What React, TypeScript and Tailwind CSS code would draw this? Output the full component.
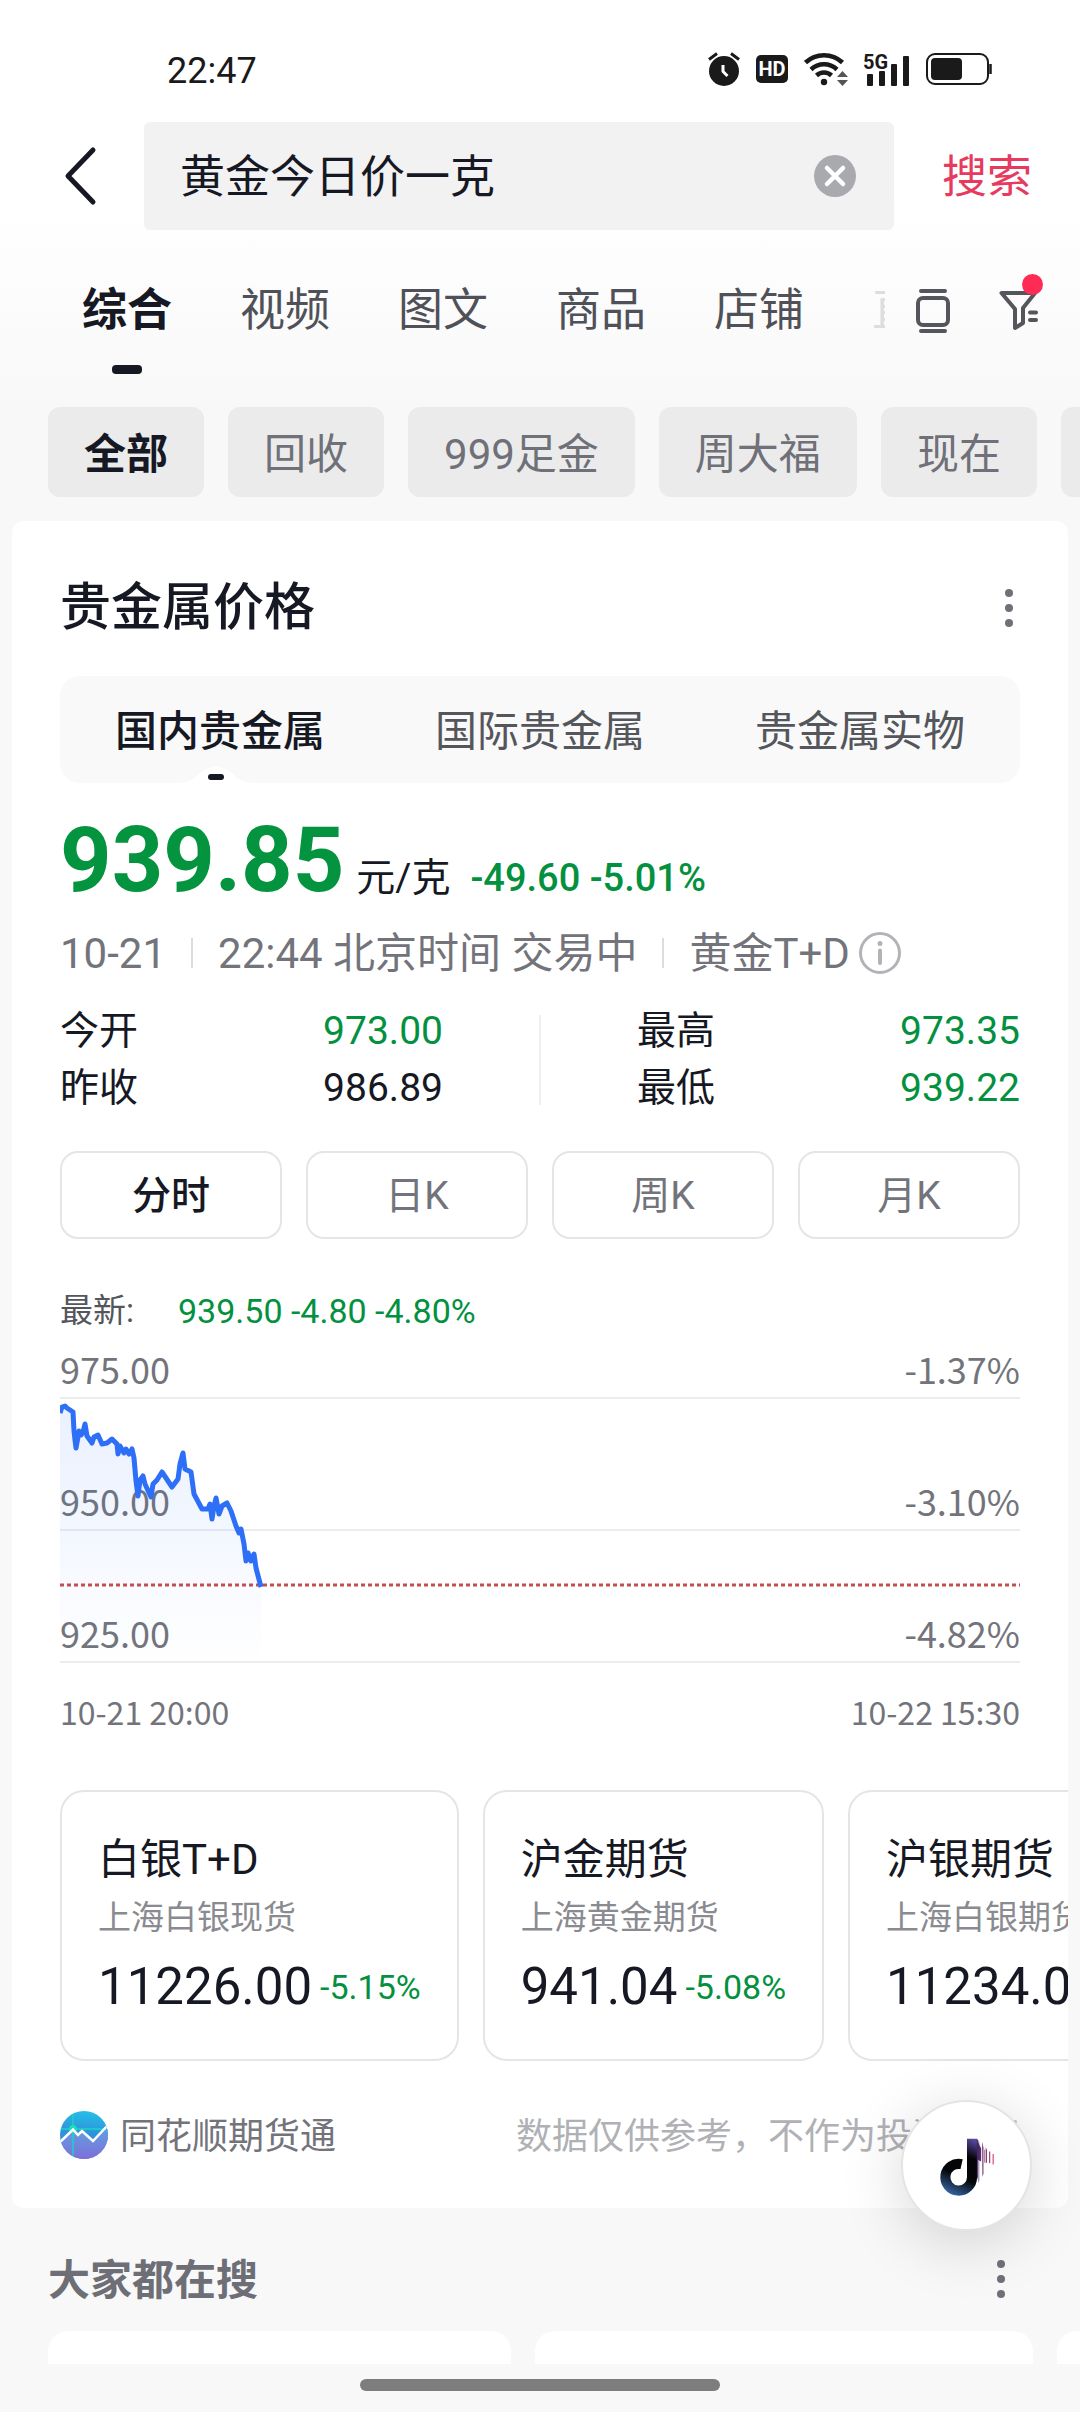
import { useState } from "react";

const searchTabs = ["综合", "视频", "图文", "商品", "店铺"];
const filters = ["全部", "回收", "999足金", "周大福", "现在", "今日"];
const metalTabs = ["国内贵金属", "国际贵金属", "贵金属实物"];
const periods = ["分时", "日K", "周K", "月K"];

const quotes = [
    { name: "白银T+D", market: "上海白银现货", price: "11226.00", change: "-5.15%" },
    { name: "沪金期货", market: "上海黄金期货", price: "941.04", change: "-5.08%" },
    { name: "沪银期货", market: "上海白银期货", price: "11234.00", change: "-5.10%" },
];

const gridRows = [
    { price: "975.00", percent: "-1.37%", height: "h-[53px]" },
    { price: "950.00", percent: "-3.10%", height: "h-[132px]" },
    { price: "925.00", percent: "-4.82%", height: "h-[132px]" },
];

// x,y pairs inside the 960x264 plot
const line =
    "0,14 2,8 5,7 7,9 13,13 14,32 15,41 16,49 18,38 19,32 21,36 23,33 25,25 27,37 32,44 34,38 38,36 42,45 47,44 52,40 57,45 58,55 60,47 64,54 66,50 69,55 72,50 74,59 76,82 78,97 80,81 83,77 85,85 91,98 93,85 97,81 102,73 106,79 112,88 118,80 120,65 123,54 125,70 131,73 134,95 142,110 148,110 150,105 152,120 154,107 156,99 159,115 162,107 167,104 171,112 176,127 179,134 181,130 184,145 186,162 188,154 191,162 194,155 196,169 201,188";

const StatusBar = () => (
    <div className="flex h-[122px] items-center justify-between pt-4 pr-[88px] pl-[167px] text-[#1a1a1a]">
        <span className="pt-1 text-[36px]">22:47</span>
        <div className="flex items-center gap-4">
            <svg width="32" height="36" viewBox="0 0 32 36" fill="none">
                <circle cx="16" cy="20" r="15" fill="#1a1a1a" />
                <path d="M1 8.500L9 2.500M31 8.500L23 2.500" stroke="#1a1a1a" strokeWidth="3" />
                <path d="M15 14V20.500L19.500 25" stroke="#fff" strokeWidth="3" />
            </svg>
            <span className="flex h-7 w-8 items-center justify-center rounded-[5px] bg-[#1a1a1a] text-[20px] font-bold text-white">
                HD
            </span>
            <svg width="44" height="36" viewBox="0 0 44 36" fill="none">
                <path
                    d="M1.500 11.500A27 27 0 0 1 38.500 11.500M7 18.500A19 19 0 0 1 33 18.500M12.500 24.500A11 11 0 0 1 27.500 24.500"
                    stroke="#1a1a1a"
                    strokeWidth="4.500"
                />
                <circle cx="20" cy="31" r="3.200" fill="#1a1a1a" />
                <path d="M33 26L38.500 20L44 26ZM33 29L38.500 35L44 29Z" fill="#555" />
            </svg>
            <svg width="46" height="36" viewBox="0 0 46 36" fill="#1a1a1a">
                <text x="-1" y="18" fontSize="20" fontWeight="700" fontFamily="Roboto">
                    5G
                </text>
                <rect x="3" y="23" width="6" height="12" rx="1" />
                <rect x="15" y="20" width="6" height="15" rx="1" />
                <rect x="27" y="13" width="6" height="22" rx="1" />
                <rect x="39" y="5" width="6" height="30" rx="1" />
            </svg>
            <svg width="66" height="32" viewBox="0 0 66 32" fill="none">
                <rect x="1" y="1" width="61" height="30" rx="8" stroke="#1a1a1a" strokeWidth="2" />
                <rect x="5" y="5" width="31" height="22" rx="4" fill="#1a1a1a" />
                <path d="M64.500 11V21" stroke="#1a1a1a" strokeWidth="2.500" />
            </svg>
        </div>
    </div>
);

const MoreButton = () => (
    <button aria-label="更多" className="flex h-12 w-6 items-center justify-center text-[#6f7078]">
        <svg width="8" height="40" viewBox="0 0 8 40" fill="currentColor">
            <circle cx="4" cy="5" r="4" />
            <circle cx="4" cy="20" r="4" />
            <circle cx="4" cy="35" r="4" />
        </svg>
    </button>
);

const SearchBar = () => (
    <form className="flex h-[108px] items-center pr-12" onSubmit={(e) => e.preventDefault()}>
        <button type="button" aria-label="返回" className="flex w-36 shrink-0 justify-center pl-4">
            <svg width="36" height="60" viewBox="0 0 36 60" fill="none">
                <path
                    d="M31 4L6 30L31 56"
                    stroke="#161823"
                    strokeWidth="5"
                    strokeLinecap="round"
                    strokeLinejoin="round"
                />
            </svg>
        </button>
        <div className="flex h-full min-w-0 flex-1 items-center rounded-[6px] bg-[#f2f2f2] pr-[38px] pl-9">
            <input
                aria-label="搜索内容"
                defaultValue="黄金今日价一克"
                className="min-w-0 flex-1 bg-transparent pt-1 text-[45px] text-[#161823] outline-none"
            />
            <button type="button" aria-label="清空">
                <svg width="42" height="42" viewBox="0 0 42 42">
                    <circle cx="21" cy="21" r="21" fill="#a9aaae" />
                    <path d="M13 13L29 29M29 13L13 29" stroke="#fff" strokeWidth="4.500" strokeLinecap="round" />
                </svg>
            </button>
        </div>
        <button type="submit" className="ml-12 pt-1 text-[45px] text-[#e63a5e]">
            搜索
        </button>
    </form>
);

const SearchTabs = () => {
    const [active, setActive] = useState("综合");

    return (
        <div className="flex items-start pt-[51px] pr-[41px] pb-[33px] pl-[82px]">
            <nav className="flex min-w-0 flex-1 gap-[68px] overflow-hidden">
                {searchTabs.map((tab) => (
                    <button
                        key={tab}
                        onClick={() => setActive(tab)}
                        className={`flex shrink-0 flex-col items-center gap-6 text-[45px] leading-[60px] ${tab === active ? "font-bold text-[#161823]" : "text-[#505158]"
                            }`}
                    >
                        {tab}
                        <span className={`h-[9px] w-[30px] rounded ${tab === active ? "bg-[#161823]" : ""}`} />
                    </button>
                ))}
                <button className="w-[13px] shrink-0 self-start overflow-hidden text-left text-[45px] leading-[60px] whitespace-nowrap text-[#dddddf]">
                    直播
                </button>
            </nav>
            <div className="flex h-[60px] items-center gap-12 pl-[29px] text-[#54565c]">
                <button aria-label="浏览模式">
                    <svg width="36" height="46" viewBox="0 0 36 46" fill="none" stroke="currentColor" strokeWidth="4">
                        <rect x="3" y="10" width="30" height="27" rx="5" />
                        <path d="M6 3H30M6 43H30" strokeLinecap="round" />
                    </svg>
                </button>
                <button aria-label="筛选" className="relative">
                    <svg
                        width="40"
                        height="42"
                        viewBox="0 0 40 42"
                        fill="none"
                        stroke="currentColor"
                        strokeWidth="4"
                        strokeLinecap="round"
                        strokeLinejoin="round"
                    >
                        <path d="M2.500 3H36L24 18V33L16 38V19Z" />
                        <path d="M31 22.500H37M31 30H37" />
                    </svg>
                    <span className="absolute -top-4 -right-1 size-[21px] rounded-full bg-[#fe2c55]" />
                </button>
            </div>
        </div>
    );
};

const Filters = () => {
    const [active, setActive] = useState("全部");

    return (
        <div className="flex gap-6 overflow-hidden pl-12">
            {filters.map((filter) => (
                <button
                    key={filter}
                    onClick={() => setActive(filter)}
                    className={`h-[90px] shrink-0 rounded-xl bg-[#ebebeb] px-9 pt-1 text-[42px] ${filter === active ? "font-bold text-[#161823]" : "text-[#6f7078]"
                        }`}
                >
                    {filter}
                </button>
            ))}
        </div>
    );
};

const MetalTabs = () => {
    const [active, setActive] = useState("国内贵金属");

    return (
        <div className="mt-8 grid h-[107px] grid-cols-3 rounded-[20px] bg-[#f9f9f9]">
            {metalTabs.map((tab) => (
                <button
                    key={tab}
                    onClick={() => setActive(tab)}
                    className={`relative pt-1 text-[42px] ${tab === active ? "font-medium text-[#161823]" : "text-[#54565c]"}`}
                >
                    {tab}
                    {tab === active && (
                        <svg
                            className="absolute bottom-0 left-1/2 -translate-x-1/2"
                            width="82"
                            height="17"
                            viewBox="0 0 82 17"
                        >
                            <path d="M0 17C18 17 20 1 37 1S56 17 74 17Z" fill="#fff" />
                            <rect x="29" y="8" width="16" height="6" rx="3" fill="#161823" />
                        </svg>
                    )}
                </button>
            ))}
        </div>
    );
};

const Stat = ({ label, value, down = true }: { label: string; value: string; down?: boolean }) => (
    <div className="flex justify-between">
        <dt>{label}</dt>
        <dd className={down ? "text-[#04913f]" : ""}>{value}</dd>
    </div>
);

const Chart = () => (
    <div className="relative mt-[15px]">
        {gridRows.map((row) => (
            <div
                key={row.price}
                className={`flex items-end justify-between border-b-2 border-[#ededee] font-['Noto_Sans_CJK_SC',sans-serif] text-[36px] leading-[58px] text-[#73747b] ${row.height}`}
            >
                <span>{row.price}</span>
                <span>{row.percent}</span>
            </div>
        ))}
        <svg
            className="absolute bottom-0 left-0 h-[264px] w-full"
            viewBox="0 0 960 264"
            preserveAspectRatio="none"
            fill="none"
        >
            <defs>
                <linearGradient id="area" x1="0" y1="0" x2="0" y2="1">
                    <stop offset="0" stopColor="#2e6ff8" stopOpacity="0.100" />
                    <stop offset="0.450" stopColor="#2e6ff8" stopOpacity="0.060" />
                    <stop offset="1" stopColor="#2e6ff8" stopOpacity="0" />
                </linearGradient>
            </defs>
            <polygon points={`${line} 201,264 0,264`} fill="url(#area)" />
            <path d="M0 186H960" stroke="#c0504f" strokeWidth="3" strokeDasharray="4 3" />
            <polyline points={line} stroke="#2e6ff8" strokeWidth="5" strokeLinejoin="round" />
        </svg>
    </div>
);

const SourceLogo = () => (
    <svg width="48" height="48" viewBox="0 0 48 48" fill="none">
        <defs>
            <linearGradient id="sky" x1="0.600" y1="0" x2="0.500" y2="1">
                <stop offset="0" stopColor="#25c0e6" />
                <stop offset="0.450" stopColor="#2e93dc" />
                <stop offset="1" stopColor="#3e7fdc" />
            </linearGradient>
            <linearGradient id="hill" x1="0" y1="0" x2="0" y2="1">
                <stop offset="0" stopColor="#5ea6e0" />
                <stop offset="1" stopColor="#7d6fda" />
            </linearGradient>
            <clipPath id="round">
                <circle cx="24" cy="24" r="24" />
            </clipPath>
        </defs>
        <g clipPath="url(#round)">
            <rect width="48" height="48" fill="url(#sky)" />
            <path d="M0 31L13 18L18 24L22 20L33 30L48 14V48H0Z" fill="url(#hill)" />
            <path d="M13 0V48M0 18H48" stroke="#19d3c8" strokeWidth="1.500" />
            <circle cx="13" cy="18" r="4" fill="#19e0b4" />
            <path d="M0 31L13 18.500L18 24L22 20L33 30L48 14" stroke="#fff" strokeWidth="2.500" />
        </g>
    </svg>
);

const PriceCard = () => {
    const [period, setPeriod] = useState("分时");

    return (
        <section className="mx-3 mt-6 overflow-hidden rounded-xl bg-white px-12 pt-[51px] pb-[46px] text-[#161823]">
            <div className="-mr-px flex items-center justify-between">
                <h2 className="text-[51px] leading-[72px] font-medium">贵金属价格</h2>
                <MoreButton />
            </div>

            <MetalTabs />

            <div className="mt-[33px] flex items-baseline">
                <span className="text-[90px] leading-[90px] font-bold text-[#04943f]">939.85</span>
                <span className="ml-3 text-[39px] leading-[60px]">元/克</span>
                <span className="ml-5 text-[38px] leading-[60px] font-medium text-[#04913f]">-49.60 -5.01%</span>
            </div>

            <div className="mt-[15px] flex h-[60px] items-center text-[42px] whitespace-nowrap text-[#73747b]">
                <span>10-21</span>
                <span className="mx-[25px] h-[30px] w-[2px] bg-[#dcdcde]" />
                <span>22:44 北京时间 交易中</span>
                <span className="mx-[25px] h-[30px] w-[2px] bg-[#dcdcde]" />
                <span>黄金T+D</span>
                <button aria-label="说明" className="ml-2">
                    <svg width="44" height="44" viewBox="0 0 44 44" fill="none" stroke="#b2b3b7">
                        <circle cx="22" cy="22" r="19.500" strokeWidth="3" />
                        <path d="M22 19.500V32" strokeWidth="4" strokeLinecap="round" />
                        <circle cx="22" cy="12.500" r="2.500" fill="#b2b3b7" stroke="none" />
                    </svg>
                </button>
            </div>

            <div className="mt-5 flex text-[39px] leading-[57px]">
                <dl className="flex-1 pr-24">
                    <Stat label="今开" value="973.00" />
                    <Stat label="昨收" value="986.89" down={false} />
                </dl>
                <div className="my-3 w-[2px] bg-[#f0f0f1]" />
                <dl className="flex-1 pl-24">
                    <Stat label="最高" value="973.35" />
                    <Stat label="最低" value="939.22" />
                </dl>
            </div>

            <div className="mt-[34px] grid grid-cols-4 gap-6">
                {periods.map((item) => (
                    <button
                        key={item}
                        onClick={() => setPeriod(item)}
                        className={`h-[88px] rounded-[18px] border-2 border-[#e5e5e6] pt-[2px] text-[39px] ${item === period ? "font-medium text-[#161823]" : "text-[#73747b]"
                            }`}
                    >
                        {item}
                    </button>
                ))}
            </div>

            <div className="mt-[52px] flex gap-11 leading-[40px]">
                <span className="text-[33px] text-[#54565c]">最新:</span>
                <span className="text-[34px] text-[#04913f]">939.50 -4.80 -4.80%</span>
            </div>

            <Chart />

            <div className="mt-[27px] flex justify-between font-['Noto_Sans_CJK_SC',sans-serif] text-[32px] leading-[42px] text-[#73747b]">
                <span>10-21 20:00</span>
                <span>10-22 15:30</span>
            </div>

            <div className="-mr-12 mt-[58px] flex gap-6 overflow-hidden">
                {quotes.map((quote) => (
                    <a
                        key={quote.name}
                        href="#"
                        className="block shrink-0 rounded-3xl border-2 border-[#e5e5e6] px-9 pt-[41px] pb-[42px]"
                    >
                        <h3 className="text-[42px] leading-[54px]">{quote.name}</h3>
                        <p className="mt-[10px] text-[33px] leading-[42px] text-[#8a8b91]">{quote.market}</p>
                        <div className="mt-[18px] flex items-center gap-2 leading-[60px]">
                            <span className="text-[51px]">{quote.price}</span>
                            <span className="text-[34px] text-[#04913f]">{quote.change}</span>
                        </div>
                    </a>
                ))}
            </div>

            <div className="mt-[47px] flex h-[54px] items-center justify-between text-[36px] leading-[50px] whitespace-nowrap">
                <div className="flex items-center gap-3 text-[#73747b]">
                    <SourceLogo />
                    <span className="pt-1">同花顺期货通</span>
                </div>
                <span className="pt-1 text-[#b0b1b5]">数据仅供参考，不作为投资建议</span>
            </div>
        </section>
    );
};

const Related = () => (
    <section className="mt-[41px]">
        <div className="flex items-center justify-between pr-[67px] pl-12">
            <h2 className="pt-1 text-[42px] leading-[56px] font-bold text-[#6d6e76]">大家都在搜</h2>
            <MoreButton />
        </div>
        <div className="mt-[22px] flex h-[33px] gap-6 overflow-hidden pl-12">
            <div className="w-[463px] shrink-0 rounded-t-[20px] bg-white" />
            <div className="w-[498px] shrink-0 rounded-t-[20px] bg-white" />
            <div className="w-[463px] shrink-0 rounded-t-[20px] bg-white" />
        </div>
    </section>
);

const DouyinButton = () => (
    <button
        aria-label="抖音"
        className="fixed right-[48px] bottom-[181px] size-[131px] rounded-full border-2 border-[#e4e4e5] bg-white shadow-[0_12px_64px_rgba(0,0,0,0.16)]"
    >
        <svg className="size-full" viewBox="123 60 390 390" fill="none">
            <defs>
                <linearGradient id="note" gradientUnits="userSpaceOnUse" x1="262" y1="345" x2="340" y2="173">
                    <stop offset="0" stopColor="#3a6cae" />
                    <stop offset="0.350" stopColor="#050608" />
                    <stop offset="0.700" stopColor="#050308" />
                    <stop offset="1" stopColor="#5d4ba6" />
                </linearGradient>
                <linearGradient id="flag" gradientUnits="userSpaceOnUse" x1="348" y1="0" x2="403" y2="0">
                    <stop offset="0" stopColor="#3a2463" />
                    <stop offset="0.500" stopColor="#7b3470" />
                    <stop offset="1" stopColor="#e0608a" />
                </linearGradient>
            </defs>
            <path d="M303 251A41 41 0 1 0 335 291V173" stroke="url(#note)" strokeWidth="31" />
            <g fill="url(#flag)">
                <path d="M350 174L353 176V290L350 300Z" />
                <path d="M350 176L363 203V243L350 236Z" />
                <path d="M355 176L357 182V300L355 310Z" />
                <path d="M366 182L370 200V280L367 290Z" />
                <path d="M373 207H375V246H373Z" />
                <path d="M377 198L381 208V246L377 248Z" />
                <path d="M387 212H391V248H387Z" />
                <path d="M398 220H402V252H398Z" />
            </g>
        </svg>
    </button>
);

export default function App() {
    return (
        <div className="flex min-h-screen flex-col bg-[#f8f8f8] font-['Roboto','Noto_Sans_CJK_SC',sans-serif]">
            <header className="bg-linear-to-b from-white from-50% to-[#f8f8f8]">
                <StatusBar />
                <SearchBar />
                <SearchTabs />
            </header>
            <main>
                <Filters />
                <PriceCard />
                <Related />
            </main>
            <footer className="flex justify-center pt-[15px] pb-[21px]">
                <div className="h-3 w-1/3 rounded-[6px] bg-[#7d7d7d]" />
            </footer>
            <DouyinButton />
        </div>
    );
}
